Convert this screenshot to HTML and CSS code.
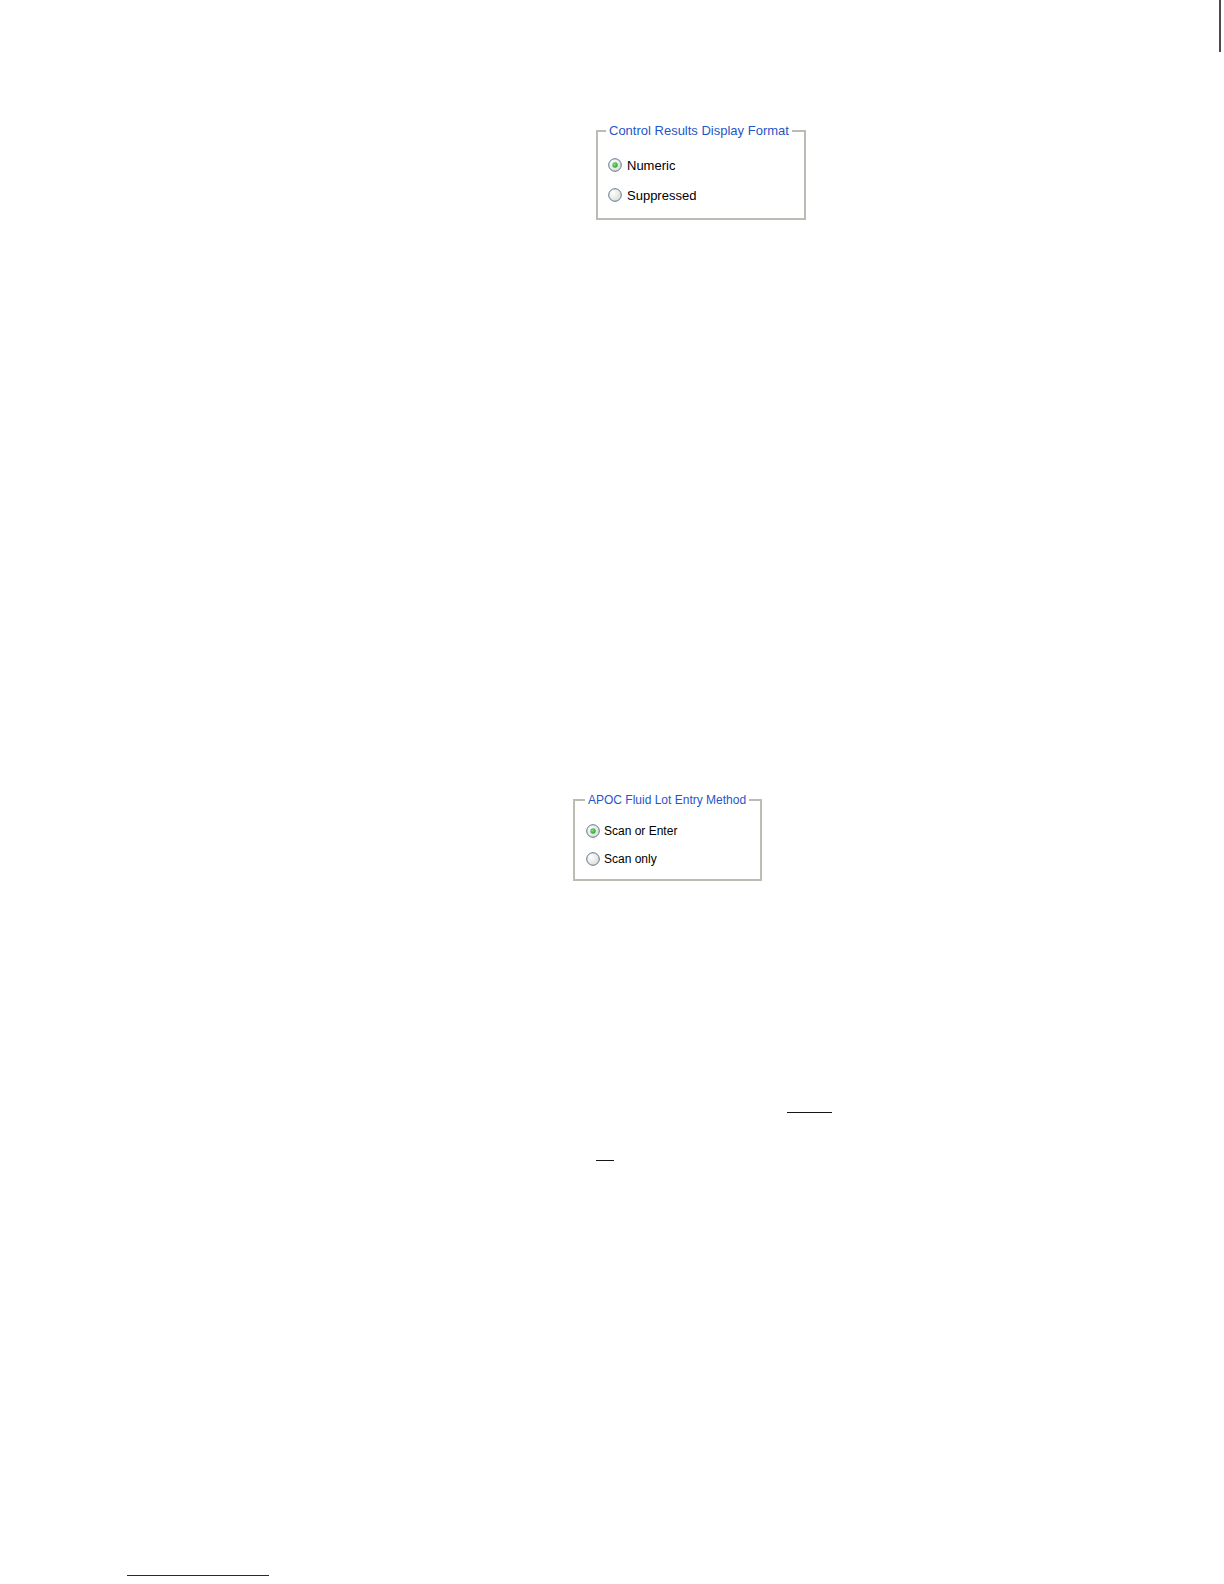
FILE: index.html
```html
<!DOCTYPE html>
<html>
<head>
<meta charset="utf-8">
<title>Settings</title>
<link rel="stylesheet" href="styles.css">
</head>
<body>
<div class="page">
  <div class="edge"></div>

  <fieldset class="group group-results">
    <legend class="group-title">Control Results Display Format</legend>
    <div class="option">
      <svg class="radio" width="14" height="14" viewBox="0 0 14 14"><defs><radialGradient id="rg1" cx="0.35" cy="0.35" r="0.8"><stop offset="0" stop-color="#ffffff"/><stop offset="1" stop-color="#d6d6d0"/></radialGradient><radialGradient id="dot1" cx="0.4" cy="0.4" r="0.7"><stop offset="0" stop-color="#7fe07f"/><stop offset="1" stop-color="#1e9a1e"/></radialGradient></defs><circle cx="7" cy="7" r="6.3" fill="url(#rg1)" stroke="#5f7790" stroke-width="1"/><circle cx="7" cy="7" r="2.7" fill="url(#dot1)"/></svg>
      <span class="label">Numeric</span>
    </div>
    <div class="option">
      <svg class="radio" width="14" height="14" viewBox="0 0 14 14"><defs><radialGradient id="rg2" cx="0.35" cy="0.35" r="0.8"><stop offset="0" stop-color="#ffffff"/><stop offset="1" stop-color="#d6d6d0"/></radialGradient></defs><circle cx="7" cy="7" r="6.3" fill="url(#rg2)" stroke="#5f7790" stroke-width="1"/></svg>
      <span class="label">Suppressed</span>
    </div>
  </fieldset>

  <fieldset class="group group-lot">
    <legend class="group-title">APOC Fluid Lot Entry Method</legend>
    <div class="option">
      <svg class="radio" width="14" height="14" viewBox="0 0 14 14"><defs><radialGradient id="rg3" cx="0.35" cy="0.35" r="0.8"><stop offset="0" stop-color="#ffffff"/><stop offset="1" stop-color="#d6d6d0"/></radialGradient><radialGradient id="dot3" cx="0.4" cy="0.4" r="0.7"><stop offset="0" stop-color="#7fe07f"/><stop offset="1" stop-color="#1e9a1e"/></radialGradient></defs><circle cx="7" cy="7" r="6.3" fill="url(#rg3)" stroke="#5f7790" stroke-width="1"/><circle cx="7" cy="7" r="2.7" fill="url(#dot3)"/></svg>
      <span class="label">Scan or Enter</span>
    </div>
    <div class="option">
      <svg class="radio" width="14" height="14" viewBox="0 0 14 14"><defs><radialGradient id="rg4" cx="0.35" cy="0.35" r="0.8"><stop offset="0" stop-color="#ffffff"/><stop offset="1" stop-color="#d6d6d0"/></radialGradient></defs><circle cx="7" cy="7" r="6.3" fill="url(#rg4)" stroke="#5f7790" stroke-width="1"/></svg>
      <span class="label">Scan only</span>
    </div>
  </fieldset>

  <div class="rule rule-a"></div>
  <div class="rule rule-b"></div>
  <div class="rule rule-c"></div>
</div>
</body>
</html>
```

FILE: styles.css
```css
html, body {
  margin: 0;
  padding: 0;
  background: #ffffff;
}

.page {
  width: 1224px;
  height: 1584px;
  overflow: hidden;
  font-family: "Liberation Sans", Arial, sans-serif;
  color: #000000;
}

.edge {
  margin-left: 1219px;
  width: 2px;
  height: 52px;
  background: #4a4a4a;
}

.group {
  box-sizing: border-box;
  margin: 0;
  padding: 0;
  border: 2px solid #bcbcb4;
  display: flex;
  flex-direction: column;
  min-width: 0;
}

.group-title {
  padding: 0 3px;
  color: #1f56c9;
  white-space: nowrap;
}

.option {
  display: flex;
  align-items: center;
  gap: 5px;
  height: 18px;
}

.radio {
  display: block;
  flex: none;
}

/* Control Results Display Format */
.group-results {
  margin-top: 72px;
  margin-left: 596px;
  width: 210px;
  height: 96px;
  padding-top: 18px;
  gap: 12px;
  font-size: 13px;
}

.group-results .group-title {
  margin-left: 8px;
  font-size: 13px;
  line-height: 14px;
}

.group-results .option {
  margin-left: 10px;
}

/* APOC Fluid Lot Entry Method */
.group-lot {
  margin-top: 573px;
  margin-left: 573px;
  width: 189px;
  height: 88px;
  padding-top: 15px;
  gap: 10px;
  font-size: 12px;
}

.group-lot .group-title {
  margin-left: 10px;
  font-size: 12px;
  line-height: 14px;
}

.group-lot .option {
  margin-left: 11px;
  gap: 4px;
}

.rule {
  height: 1px;
  background: #161616;
}

.rule-a {
  margin-top: 231px;
  margin-left: 787px;
  width: 45px;
}

.rule-b {
  margin-top: 47px;
  margin-left: 596px;
  width: 18px;
}

.rule-c {
  margin-top: 414px;
  margin-left: 127px;
  width: 142px;
  background: #1b1f8c;
}
```
